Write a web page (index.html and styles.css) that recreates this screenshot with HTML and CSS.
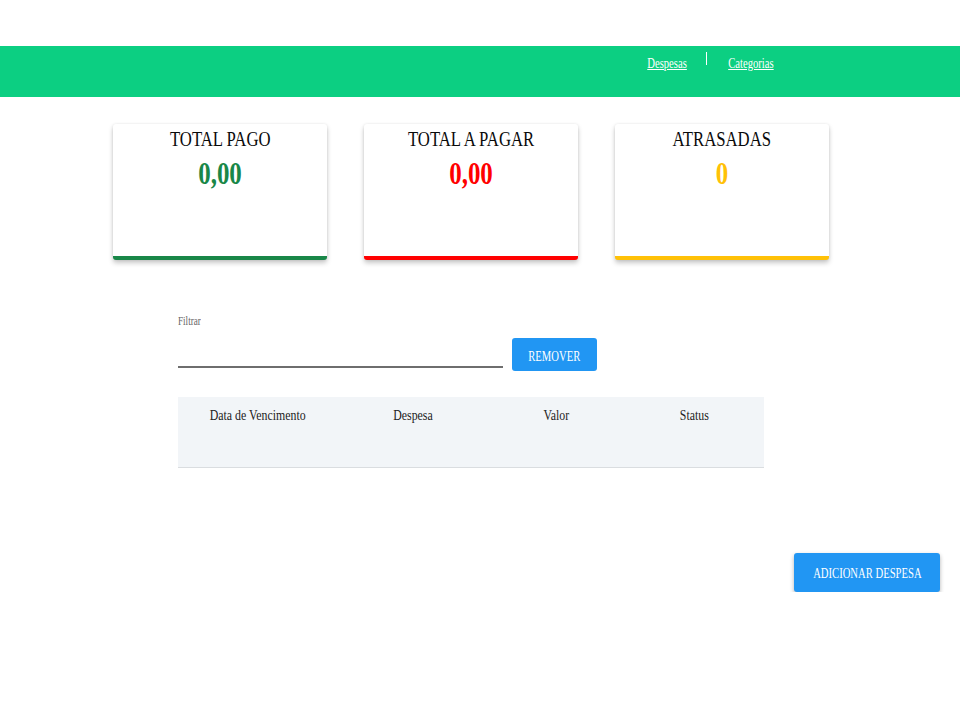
FILE: index.html
```html
<!DOCTYPE html>
<html lang="pt-BR">
<head>
<meta charset="utf-8">
<title>Despesas</title>
<link rel="stylesheet" href="styles.css">
</head>
<body>
  <div class="topgap"></div>
  <header class="header">
    <nav class="nav">
      <a class="nav-link" href="#"><span class="sq">Despesas</span></a>
      <span class="nav-sep"></span>
      <a class="nav-link" href="#"><span class="sq">Categorias</span></a>
    </nav>
  </header>

  <section class="cards">
    <div class="card card-green">
      <div class="card-title"><span class="sq">TOTAL PAGO</span></div>
      <div class="card-value green"><span class="sq-val">0,00</span></div>
    </div>
    <div class="card card-red">
      <div class="card-title"><span class="sq">TOTAL A PAGAR</span></div>
      <div class="card-value red"><span class="sq-val">0,00</span></div>
    </div>
    <div class="card card-yellow">
      <div class="card-title"><span class="sq">ATRASADAS</span></div>
      <div class="card-value yellow"><span class="sq-val">0</span></div>
    </div>
  </section>

  <section class="filter">
    <div class="field">
      <label class="field-label"><span class="sq sq-left">Filtrar</span></label>
      <div class="field-input"></div>
    </div>
    <button class="btn btn-remove"><span class="sq">REMOVER</span></button>
  </section>

  <section class="table">
    <div class="th"><span class="sq">Data de Vencimento</span></div>
    <div class="th"><span class="sq">Despesa</span></div>
    <div class="th"><span class="sq">Valor</span></div>
    <div class="th"><span class="sq">Status</span></div>
  </section>

  <section class="actions">
    <button class="btn btn-add"><span class="sq">ADICIONAR DESPESA</span></button>
  </section>
</body>
</html>
```

FILE: styles.css
```css
html, body {
  margin: 0;
  padding: 0;
  background: #ffffff;
  font-family: "Liberation Serif", "Times New Roman", serif;
  color: #111;
}

.sq {
  display: inline-block;
  transform: scaleX(0.76);
  transform-origin: center;
  white-space: nowrap;
}
.sq-left { transform-origin: left center; }

.sq-val {
  display: inline-block;
  transform: scaleX(0.78);
  white-space: nowrap;
}

.topgap { height: 46px; }

.header {
  height: 51px;
  background: #0ccf82;
  display: flex;
  justify-content: flex-end;
}

.nav {
  display: flex;
  align-items: flex-start;
  padding: 6px 179px 0 0;
}

.nav-link {
  color: #ffffff;
  font-size: 14px;
  line-height: 16px;
  margin-top: 4px;
}
.nav-link .sq {
  text-decoration: underline;
}

.nav-sep {
  width: 1px;
  height: 13px;
  background: #ffffff;
  margin: 0 14px 0 13px;
}

.cards {
  display: flex;
  gap: 37px;
  padding-left: 113px;
  margin-top: 27px;
}

.card {
  width: 214px;
  height: 130px;
  background: #fff;
  border-bottom: 4px solid;
  border-radius: 3px;
  box-shadow: 0 3px 5px rgba(0, 0, 0, 0.22), 0 0 3px rgba(0, 0, 0, 0.08);
  text-align: center;
  padding-top: 2px;
}
.card-green { border-bottom-color: #198748; }
.card-red { border-bottom-color: #ff0000; }
.card-yellow { border-bottom-color: #ffc107; }

.card-title {
  font-size: 22px;
  line-height: 25px;
  color: #0a0a0a;
}

.card-value {
  font-size: 32px;
  font-weight: bold;
  line-height: 34px;
  margin-top: 5px;
}
.green { color: #198748; }
.red { color: #ff0000; }
.yellow { color: #ffc107; }

.filter {
  display: flex;
  align-items: flex-start;
  padding-left: 178px;
  margin-top: 54px;
}

.field {
  width: 325px;
  display: flex;
  flex-direction: column;
}

.field-label {
  font-size: 12px;
  line-height: 14px;
  color: #666;
}

.field-input {
  height: 38px;
  border-bottom: 2px solid #6e6e6e;
}

.btn {
  border: none;
  background: #2196f3;
  color: #fff;
  font-family: "Liberation Serif", "Times New Roman", serif;
  font-size: 14px;
  border-radius: 3px;
  padding: 0;
  cursor: pointer;
}

.btn-remove {
  width: 85px;
  height: 33px;
  margin-left: 9px;
  margin-top: 24px;
  padding-top: 4px;
}

.table {
  display: grid;
  grid-template-columns: 160px 150px 136px 140px;
  width: 586px;
  height: 70px;
  margin: 26px 0 0 178px;
  background: #f2f5f8;
  border-bottom: 1px solid #dadde0;
}

.th {
  text-align: center;
  font-size: 15px;
  line-height: 17px;
  padding-top: 10px;
  color: #222;
}
.th .sq { transform: scaleX(0.79); }

.actions {
  display: flex;
  justify-content: flex-end;
  padding-right: 20px;
  margin-top: 85px;
}

.btn-add {
  width: 146px;
  height: 39px;
  box-shadow: 0 2px 4px rgba(0, 0, 0, 0.3);
  padding-top: 2px;
}
```
